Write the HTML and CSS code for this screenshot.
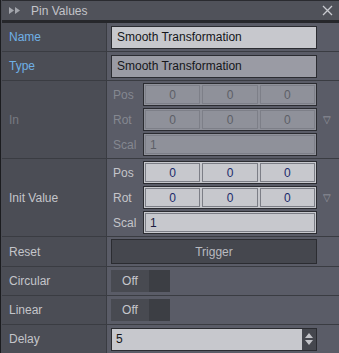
FILE: index.html
```html
<!DOCTYPE html>
<html lang="en">
<head>
    <meta charset="UTF-8">
    <title>Pin Values</title>
    <link rel="stylesheet" href="styles.css">
</head>
<body>
<div class="panel">
    <header class="titlebar">
        <svg class="grip" width="12" height="7" viewBox="0 0 12 7"><path d="M0 0L5 3.5L0 7Z M6 0L11 3.5L6 7Z" fill="#a3a5ac"/></svg>
        <span class="title">Pin Values</span>
        <svg class="close" width="11" height="11" viewBox="0 0 11 11"><path d="M1 1L10 10M10 1L1 10" stroke="#c9cad0" stroke-width="1.3"/></svg>
    </header>
    <div class="rows">
        <div class="row">
            <div class="label link">Name</div>
            <div class="value"><div class="field light">Smooth Transformation</div></div>
        </div>
        <div class="row">
            <div class="label link">Type</div>
            <div class="value"><div class="field mid">Smooth Transformation</div></div>
        </div>
        <div class="row tall">
            <div class="label dim">In</div>
            <div class="value">
                <div class="vec disabled">
                    <div class="vrow"><span class="sub">Pos</span><div class="cells"><span>0</span><span>0</span><span>0</span></div></div>
                    <div class="vrow"><span class="sub">Rot</span><div class="cells"><span>0</span><span>0</span><span>0</span></div></div>
                    <div class="vrow"><span class="sub">Scal</span><div class="cells single"><span>1</span></div></div>
                </div>
                <span class="drop">&#9661;</span>
            </div>
        </div>
        <div class="row tall">
            <div class="label">Init Value</div>
            <div class="value">
                <div class="vec">
                    <div class="vrow"><span class="sub">Pos</span><div class="cells"><span>0</span><span>0</span><span>0</span></div></div>
                    <div class="vrow"><span class="sub">Rot</span><div class="cells"><span>0</span><span>0</span><span>0</span></div></div>
                    <div class="vrow"><span class="sub">Scal</span><div class="cells single"><span>1</span></div></div>
                </div>
                <span class="drop">&#9661;</span>
            </div>
        </div>
        <div class="row">
            <div class="label">Reset</div>
            <div class="value"><div class="button">Trigger</div></div>
        </div>
        <div class="row">
            <div class="label">Circular</div>
            <div class="value"><div class="toggle"><span class="on">Off</span><span class="knob"></span></div></div>
        </div>
        <div class="row">
            <div class="label">Linear</div>
            <div class="value"><div class="toggle"><span class="on">Off</span><span class="knob"></span></div></div>
        </div>
        <div class="row">
            <div class="label">Delay</div>
            <div class="value">
                <div class="field light spin">
                    <span class="num">5</span>
                    <span class="arrows"><svg width="10" height="16" viewBox="0 0 10 16"><path d="M5 2L9 7H1Z M5 14L9 9H1Z" fill="#c2c3c8"/></svg></span>
                </div>
            </div>
        </div>
    </div>
</div>
</body>
</html>
```
FILE: styles.css
```css
body {
    margin: 0;
    background: #4b4d55;
    font-family: "Liberation Sans", Arial, sans-serif;
    font-size: 12px;
    color: #c6c7cc;
}
.panel {
    width: 339px;
    height: 353px;
    border-left: 1px solid #1b1c1f;
    box-sizing: border-box;
    overflow: hidden;
    background: #4b4d55;
}
.titlebar {
    display: flex;
    align-items: center;
    height: 19px;
    margin-left: 1px;
    border-top: 1px solid #2a2b30;
    border-bottom: 3px solid #26272b;
    background: #50525a;
    padding: 0 0 0 7px;
}
.grip {
    margin-right: 10px;
}
.title {
    flex: 1;
    color: #c3c4c9;
}
.close {
    margin-right: 6px;
}
.rows {
    margin-left: 1px;
}
.row {
    display: grid;
    grid-template-columns: 105px 1fr;
    border-bottom: 1px solid #3a3c42;
    min-height: 28px;
}
.row.tall {
    min-height: 77px;
}
.label {
    display: flex;
    align-items: center;
    padding-left: 7px;
    border-right: 1px solid #3a3c42;
    background: #4b4d55;
    color: #c4c5ca;
}
.label.link {
    color: #6fb0e6;
}
.label.dim {
    color: #777a82;
}
.value {
    display: flex;
    align-items: center;
    background: #5a5c67;
    padding: 2px 0 2px 4px;
}
.field {
    width: 206px;
    height: 23px;
    box-sizing: border-box;
    border: 1px solid #2b2c31;
    padding-left: 5px;
    display: flex;
    align-items: center;
    color: #15161a;
}
.field.light {
    background: #c7c8cd;
}
.field.mid {
    background: #9a9ba4;
}
.vec {
    width: 206px;
    display: flex;
    flex-direction: column;
    gap: 2px;
}
.vrow {
    display: flex;
    align-items: center;
    height: 23px;
}
.sub {
    width: 30px;
    padding-left: 2px;
    color: #c4c5ca;
}
.cells {
    flex: 1;
    height: 23px;
    box-sizing: border-box;
    border: 1px solid #2b2c31;
    background: #c7c8cd;
    display: flex;
    padding: 1px;
    gap: 2px;
}
.cells span {
    flex: 1;
    border: 1px solid #7c7e86;
    display: flex;
    align-items: center;
    justify-content: center;
    color: #1b2a6a;
}
.cells.single span {
    justify-content: flex-start;
    padding-left: 4px;
    color: #1b1c40;
}
.vec.disabled .sub {
    color: #858891;
}
.vec.disabled .cells {
    background: #8f919a;
}
.vec.disabled .cells span {
    color: #5d5f67;
    border-color: #7d7f88;
}
.drop {
    margin-left: 6px;
    color: #9a9ca3;
    font-size: 10px;
}
.button {
    width: 206px;
    height: 25px;
    box-sizing: border-box;
    border: 1px solid #2b2c31;
    background: #45474e;
    display: flex;
    align-items: center;
    justify-content: center;
    color: #b9bac0;
}
.toggle {
    display: flex;
    width: 59px;
    height: 22px;
    background: #3c3e44;
}
.toggle .on {
    width: 38px;
    background: #484a51;
    display: flex;
    align-items: center;
    justify-content: center;
    color: #c6c7cc;
}
.spin {
    padding-left: 4px;
    padding-right: 0;
}
.num {
    flex: 1;
}
.arrows {
    width: 14px;
    height: 100%;
    background: #45474e;
    display: flex;
    align-items: center;
    justify-content: center;
}
```
